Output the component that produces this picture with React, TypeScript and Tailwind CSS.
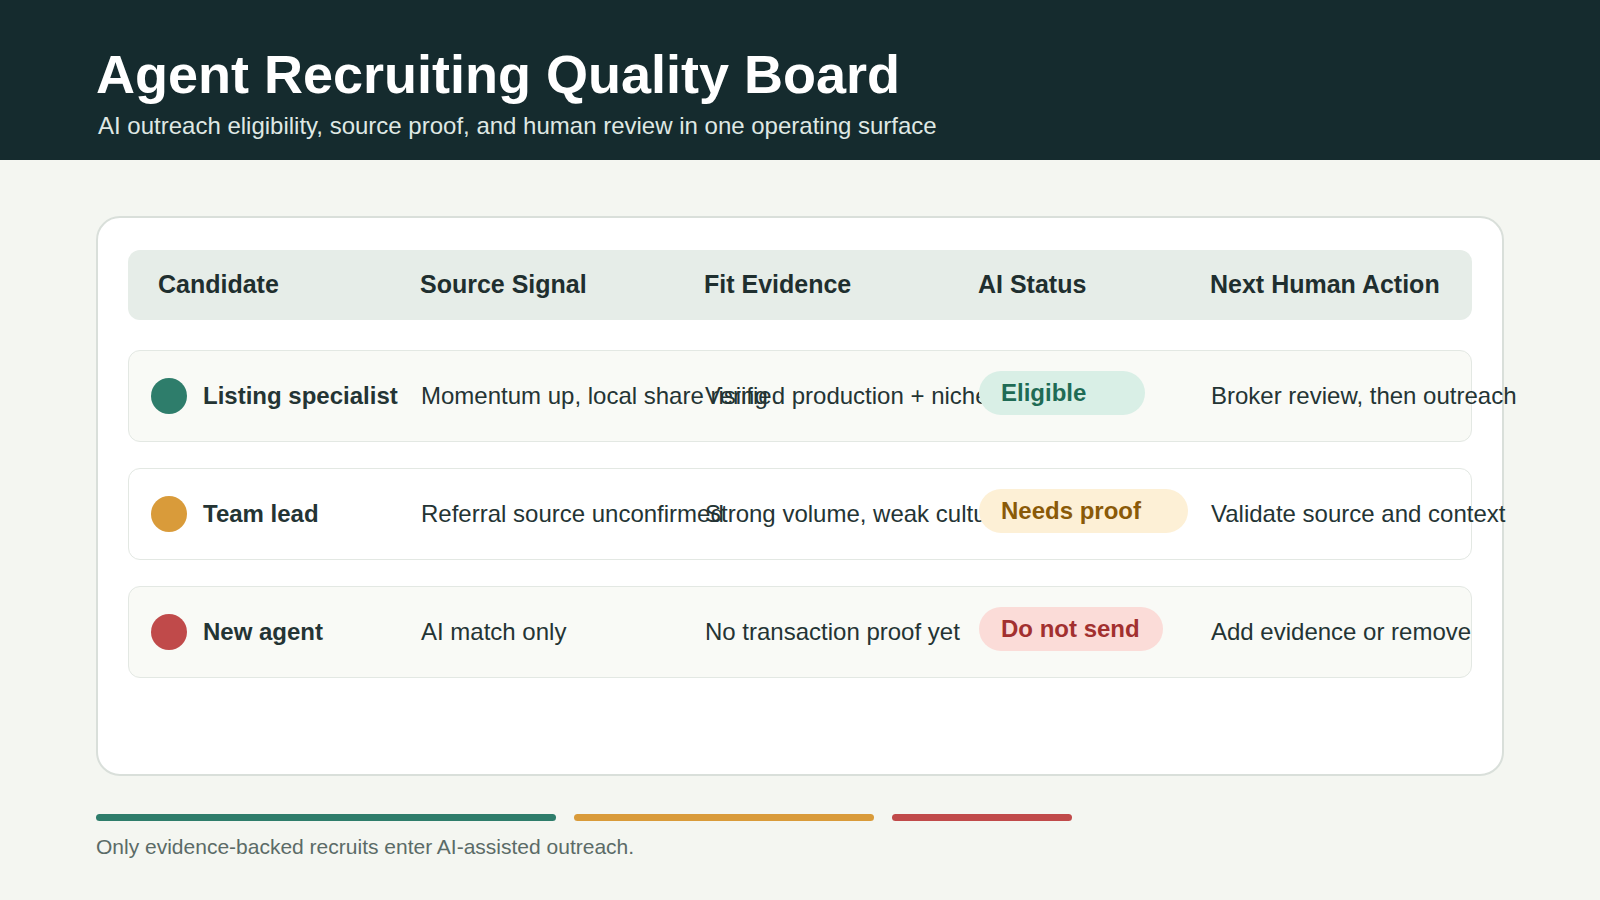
export default function App() {
  const rows = [
    { dot: "bg-[#2e7d6b]", name: "Listing specialist", src: "Momentum up, local share rising", fit: "Verified production + niche fit", badge: "Eligible", bw: "w-[166px]", bc: "bg-[#d9efe6] text-[#1f6b55]", next: "Broker review, then outreach", bg: "bg-[#f9faf6]" },
    { dot: "bg-[#d99b3a]", name: "Team lead", src: "Referral source unconfirmed", fit: "Strong volume, weak culture signal", badge: "Needs proof", bw: "w-[209px]", bc: "bg-[#fdf0d6] text-[#8a5a08]", next: "Validate source and context", bg: "bg-white" },
    { dot: "bg-[#c04a4a]", name: "New agent", src: "AI match only", fit: "No transaction proof yet", badge: "Do not send", bw: "w-[184px]", bc: "bg-[#fbdcd8] text-[#a2302f]", next: "Add evidence or remove", bg: "bg-[#f9faf6]" },
  ];
  const grid = "grid grid-cols-[262px_284px_274px_232px_1fr] px-[30px] items-center whitespace-nowrap";
  return (
    <div className="w-[1600px] h-[900px] bg-[#f4f6f1] text-[#1f2f2f]" style={{ fontFamily: '"Liberation Sans", Arial, sans-serif' }}>
      <div className="h-[160px] bg-[#152b2e] pl-[96px] pt-[42px]">
        <div className="text-[54px] font-bold text-white leading-[64px]">Agent Recruiting Quality Board</div>
        <div className="text-[24px] text-[#dfe8e4] mt-[2px] pl-[2px]">AI outreach eligibility, source proof, and human review in one operating surface</div>
      </div>
      <div className="mx-[96px] mt-[56px] h-[560px] bg-white border-2 border-[#d9dfda] rounded-[24px] px-[30px] pt-[32px]">
        <div className={`${grid} h-[70px] bg-[#e6ede8] rounded-[12px] text-[25px] font-bold text-[#1f2f2f]`}>
          <div>Candidate</div><div>Source Signal</div><div>Fit Evidence</div><div>AI Status</div><div>Next Human Action</div>
        </div>
        <div className="flex flex-col gap-[26px] mt-[30px]">
          {rows.map((r) => (
            <div key={r.name} className={`${grid} !px-[22px] h-[92px] ${r.bg} border border-[#e3e8e3] rounded-[12px] text-[24px] text-[#243434]`} style={{ gridTemplateColumns: "270px 284px 274px 232px 1fr" }}>
              <div className="flex items-center gap-[16px]">
                <div className={`w-[36px] h-[36px] rounded-full ${r.dot}`} />
                <span className="font-bold">{r.name}</span>
              </div>
              <div>{r.src}</div>
              <div>{r.fit}</div>
              <div className="-mt-[6px]"><span className={`inline-block rounded-full pl-[22px] ${r.bw} leading-[44px] font-bold ${r.bc}`}>{r.badge}</span></div>
              <div>{r.next}</div>
            </div>
          ))}
        </div>
      </div>
      <div className="ml-[96px] mt-[38px] flex gap-[18px]">
        <div className="w-[460px] h-[7px] rounded-full bg-[#2e7d6b]" />
        <div className="w-[300px] h-[7px] rounded-full bg-[#d99b3a]" />
        <div className="w-[180px] h-[7px] rounded-full bg-[#c04a4a]" />
      </div>
      <div className="ml-[96px] mt-[10px] text-[21px] text-[#5b6b67]">Only evidence-backed recruits enter AI-assisted outreach.</div>
    </div>
  );
}
